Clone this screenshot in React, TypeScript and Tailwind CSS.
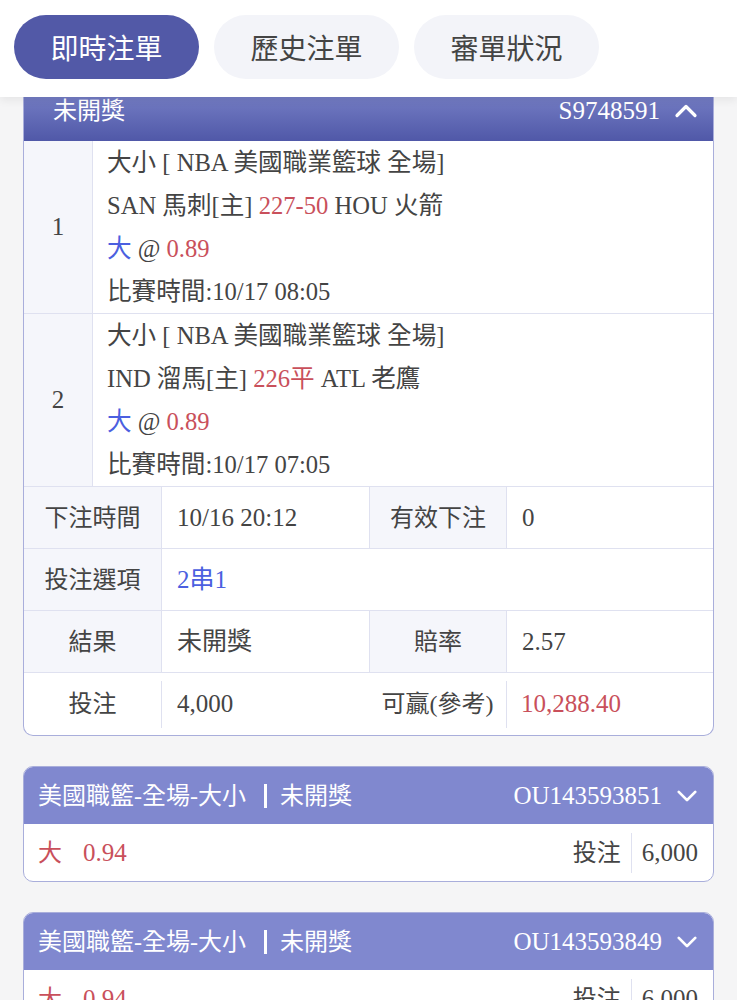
import { useState } from 'react';

const FONT = { fontFamily: '"Liberation Serif", "Noto Sans CJK TC", serif' };

const red = 'text-[#c9505b]';
const blue = 'text-[#4b5fe0]';

function ChevronUp() {
  return (
    <svg className="w-[24px] h-[24px]" viewBox="0 0 24 24" fill="none" stroke="white" strokeWidth={3.2} strokeLinecap="round" strokeLinejoin="round">
      <path d="M3 16.5L12 7.5l9 9" />
    </svg>
  );
}

function ChevronDown() {
  return (
    <svg className="w-[22px] h-[22px]" viewBox="0 0 24 24" fill="none" stroke="white" strokeWidth={3} strokeLinecap="round" strokeLinejoin="round">
      <path d="M3 7.5l9 9 9-9" />
    </svg>
  );
}

interface LegProps {
  no: number;
  home: string;
  line: string;
  away: string;
  time: string;
}

function Leg({ no, home, line, away, time }: LegProps) {
  return (
    <div className="flex border-b border-[#dfe1f0]">
      <div className="w-[69px] shrink-0 bg-[#f5f6fb] border-r border-[#dfe1f0] flex items-center justify-center text-[25px] text-[#444]">
        {no}
      </div>
      <div className="flex-1 pl-[14px] text-[24.6px] leading-[43px] text-[#444]">
        <div>大小 [ NBA 美國職業籃球 全場]</div>
        <div>
          {home} <span className={red}>{line}</span> {away}
        </div>
        <div>
          <span className={blue}>大</span> @ <span className={red}>0.89</span>
        </div>
        <div>比賽時間:{time}</div>
      </div>
    </div>
  );
}

function Label({ children }: { children: React.ReactNode }) {
  return (
    <div className="h-[61px] flex items-center justify-center text-[24px] text-[#444] bg-[#f5f6fb] border-r border-[#dfe1f0]">
      {children}
    </div>
  );
}

function Value({ children, className = 'text-[#444]' }: { children: React.ReactNode; className?: string }) {
  return <div className={`h-[61px] flex items-center pl-[15px] text-[25px] ${className}`}>{children}</div>;
}

function Divider() {
  return <div className="w-px h-[47px] bg-[#dfe1f0] self-center" />;
}

function SmallCard({ id }: { id: string }) {
  return (
    <div className="rounded-[10px] border border-[#a9aedb] overflow-hidden bg-white">
      <div className="h-[57px] bg-[#8088cf] flex items-center justify-between pl-[14px] pr-[15px] text-white text-[24px]">
        <div className="flex items-center">
          <span>美國職籃-全場-大小</span>
          <span className="inline-block w-[3px] h-[24px] bg-white ml-[18px] mr-[13px]" />
          <span>未開獎</span>
        </div>
        <div className="flex items-center gap-[14px]">
          <span className="text-[25px]">{id}</span>
          <ChevronDown />
        </div>
      </div>
      <div className="h-[57px] flex items-center justify-between pl-[14px] pr-[15px] text-[24px]">
        <div className={red}>
          <span>大</span>
          <span className="ml-[21px] text-[25px]">0.94</span>
        </div>
        <div className="flex items-center text-[#444]">
          <span>投注</span>
          <span className="w-px h-[40px] bg-[#dfe1f0] mx-[10px]" />
          <span className="text-[25px]">6,000</span>
        </div>
      </div>
    </div>
  );
}

export default function App() {
  const [tab, setTab] = useState(0);
  const tabs = ['即時注單', '歷史注單', '審單狀況'];

  return (
    <div className="min-h-screen bg-[#f5f5f6] overflow-hidden" style={FONT}>
      {/* Tabs */}
      <div className="relative z-10 h-[97px] bg-white shadow-[0_4px_8px_rgba(0,0,0,0.06)] flex items-start pt-[15px] gap-[15px] px-[14px]">
        {tabs.map((t, i) => (
          <button
            key={t}
            onClick={() => setTab(i)}
            className={`w-[185px] h-[64px] rounded-full text-[28px] ${
              tab === i ? 'bg-[#5259a7] text-white' : 'bg-[#f3f4f9] text-[#444]'
            }`}
            style={{ fontFamily: '"Noto Sans CJK TC", sans-serif' }}
          >
            {t}
          </button>
        ))}
      </div>

      <div className="-mt-[16px] px-[23px] flex flex-col gap-[30px]">
        {/* Main bet */}
        <div className="rounded-b-[10px] border border-[#a9aedb] border-t-0 overflow-hidden bg-white">
          <div className="h-[60px] bg-gradient-to-b from-[#8088cc] to-[#5058a8] flex items-center justify-between pl-[29px] pr-[15px] text-white text-[24px]">
            <span>未開獎</span>
            <div className="flex items-center gap-[14px]">
              <span className="text-[25px]">S9748591</span>
              <ChevronUp />
            </div>
          </div>
          <Leg no={1} home="SAN 馬刺[主]" line="227-50" away="HOU 火箭" time="10/17 08:05" />
          <Leg no={2} home="IND 溜馬[主]" line="226平" away="ATL 老鷹" time="10/17 07:05" />

          <div className="grid grid-cols-[138px_208px_137px_1fr]">
            <div className="col-span-4 grid grid-cols-subgrid border-b border-[#dfe1f0]">
              <Label>下注時間</Label>
              <Value className="text-[#444] border-r border-[#dfe1f0]">10/16 20:12</Value>
              <Label>有效下注</Label>
              <Value>0</Value>
            </div>
            <div className="col-span-4 grid grid-cols-subgrid border-b border-[#dfe1f0]">
              <Label>投注選項</Label>
              <Value className={`col-span-3 ${blue}`}>2串1</Value>
            </div>
            <div className="col-span-4 grid grid-cols-subgrid border-b border-[#dfe1f0]">
              <Label>結果</Label>
              <Value className="text-[#444] border-r border-[#dfe1f0]">未開獎</Value>
              <Label>賠率</Label>
              <Value>2.57</Value>
            </div>
            <div className="col-span-4 flex">
              <div className="w-[137px] h-[62px] flex items-center justify-center text-[24px] text-[#444]">投注</div>
              <Divider />
              <div className="w-[207px] h-[62px] flex items-center pl-[15px] text-[25px] text-[#444]">4,000</div>
              <div className="w-[137px] h-[62px] flex items-center justify-center text-[24px] text-[#444]">可贏(參考)</div>
              <Divider />
              <div className={`flex-1 h-[62px] flex items-center pl-[14px] text-[25px] ${red}`}>10,288.40</div>
            </div>
          </div>
        </div>

        <SmallCard id="OU143593851" />
        <SmallCard id="OU143593849" />
      </div>
    </div>
  );
}
